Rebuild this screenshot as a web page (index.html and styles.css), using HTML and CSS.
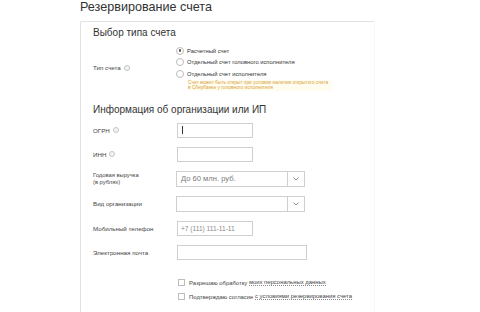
FILE: index.html
```html
<!DOCTYPE html>
<html lang="ru">
<head>
<meta charset="utf-8">
<title>Резервирование счета</title>
<link rel="stylesheet" href="styles.css">
</head>
<body>
<div class="page">
  <h1 class="title">Резервирование счета</h1>
  <div class="card">
    <h2 class="section-title">Выбор типа счета</h2>
    <div class="row row-type">
      <div class="label">Тип счета <span class="info"></span></div>
      <div class="radios">
        <div class="radio checked"><span class="dot"></span>Расчетный счет</div>
        <div class="radio"><span class="dot"></span>Отдельный счет головного исполнителя</div>
        <div class="radio"><span class="dot"></span>Отдельный счет исполнителя</div>
        <div class="note">Счет может быть открыт при условии наличия открытого счета<br>в Сбербанке у головного исполнителя</div>
      </div>
    </div>

    <h2 class="section-title second">Информация об организации или ИП</h2>

    <div class="row field">
      <div class="label">ОГРН <span class="info"></span></div>
      <div class="input short"><span class="caret"></span></div>
    </div>
    <div class="row field">
      <div class="label">ИНН <span class="info"></span></div>
      <div class="input short"></div>
    </div>
    <div class="row field">
      <div class="label two-line">Годовая выручка<br>(в рублях)</div>
      <div class="select"><span class="value">До 60 млн. руб.</span><span class="arrow"><svg width="6" height="4" viewBox="0 0 6 4"><polyline points="0.5,0.5 3,3 5.5,0.5" fill="none" stroke="#888" stroke-width="0.9"/></svg></span></div>
    </div>
    <div class="row field">
      <div class="label">Вид организации</div>
      <div class="select"><span class="value"></span><span class="arrow"><svg width="6" height="4" viewBox="0 0 6 4"><polyline points="0.5,0.5 3,3 5.5,0.5" fill="none" stroke="#888" stroke-width="0.9"/></svg></span></div>
    </div>
    <div class="row field">
      <div class="label">Мобильный телефон</div>
      <div class="input short phone">+7 (111) 111-11-11</div>
    </div>
    <div class="row field">
      <div class="label">Электронная почта</div>
      <div class="input wide"></div>
    </div>

    <div class="checks">
      <div class="check"><span class="box"></span>Разрешаю обработку <span class="link">моих персональных данных</span></div>
      <div class="check"><span class="box"></span>Подтверждаю согласие <span class="link">с условиями резервирования счета</span></div>
    </div>

    <div class="divider"></div>
  </div>
</div>
</body>
</html>
```

FILE: styles.css
```css
html, body {
  margin: 0;
  padding: 0;
  background: #ffffff;
}
body {
  font-family: "Liberation Sans", Arial, sans-serif;
  color: #333333;
}
.page {
  padding: 0 0 0 80px;
}
.title {
  margin: 0 0 7px 0;
  font-size: 12.6px;
  font-weight: normal;
  line-height: 14px;
  color: #333333;
}
.card {
  width: 274px;
  padding: 5px 7px 0 12px;
  border: 1px solid #e2e2e2;
  border-right-color: #f8f8f8;
  border-bottom: none;
  border-radius: 2px 2px 0 0;
  height: 300px;
}
.section-title {
  margin: 0;
  font-size: 10px;
  font-weight: normal;
  line-height: 12px;
  color: #333333;
}
.section-title.second {
  margin-top: 13px;
  margin-bottom: 7px;
}
.row {
  display: flex;
  align-items: center;
}
.label {
  width: 84px;
  flex: none;
  font-size: 6.2px;
  line-height: 7px;
  color: #444444;
  display: flex;
  align-items: center;
}
.label.two-line {
  display: block;
  font-size: 5.8px;
}
.info {
  display: inline-block;
  width: 4px;
  height: 4px;
  border: 1px solid #c4c4c4;
  border-radius: 50%;
  margin-left: 3px;
  background: #f4f4f4;
}
.row-type {
  margin-top: 6px;
}
.radios {
  display: flex;
  flex-direction: column;
}
.radio {
  display: flex;
  align-items: center;
  height: 11.5px;
  font-size: 5.8px;
  color: #333333;
}
.dot {
  width: 6px;
  height: 6px;
  border: 1px solid #bdbdbd;
  border-radius: 50%;
  margin-right: 3px;
  margin-left: -1px;
  flex: none;
  display: flex;
  align-items: center;
  justify-content: center;
  background: #fff;
}
.radio.checked .dot::after {
  content: "";
  width: 2.6px;
  height: 2.6px;
  border-radius: 50%;
  background: #555555;
}
.note {
  margin-left: 11px;
  font-size: 4.8px;
  line-height: 5.5px;
  color: #d9a441;
  background: #fffcf0;
  padding-right: 4px;
  align-self: flex-start;
}
.field {
  margin-bottom: 9px;
}
.input {
  height: 13px;
  border: 1px solid #cfcfcf;
  background: #fff;
  box-sizing: content-box;
  display: flex;
  align-items: center;
  font-size: 6.6px;
  color: #8a8a8a;
  padding-left: 3px;
}
.input.short {
  width: 71px;
}
.input.wide {
  width: 125px;
}
.caret {
  width: 0;
  height: 8px;
  border-left: 1px solid #333;
  margin-left: 1px;
}
.select {
  display: flex;
  width: 127px;
  height: 14px;
  border: 1px solid #cfcfcf;
  margin-left: -1px;
  background: #fff;
}
.select .value {
  flex: 1;
  display: flex;
  align-items: center;
  padding-left: 4px;
  font-size: 7.6px;
  color: #7a7a7a;
}
.select .arrow {
  width: 16px;
  border-left: 1px solid #cfcfcf;
  display: flex;
  align-items: center;
  justify-content: center;
}
.checks {
  margin-left: 84px;
  margin-top: -1px;
  padding-top: 8px;
}
.check {
  display: flex;
  align-items: center;
  height: 14px;
  font-size: 5.9px;
  color: #444444;
  white-space: pre;
}
.box {
  width: 5px;
  height: 5px;
  border: 1px solid #bdbdbd;
  margin-left: 1px;
  margin-right: 4px;
  flex: none;
}
.link {
  border-bottom: 0.5px dotted #888;
}
.divider {
  margin-top: 12px;
  height: 0;
  border-top: 1px solid #dcdcdc;
}
```
